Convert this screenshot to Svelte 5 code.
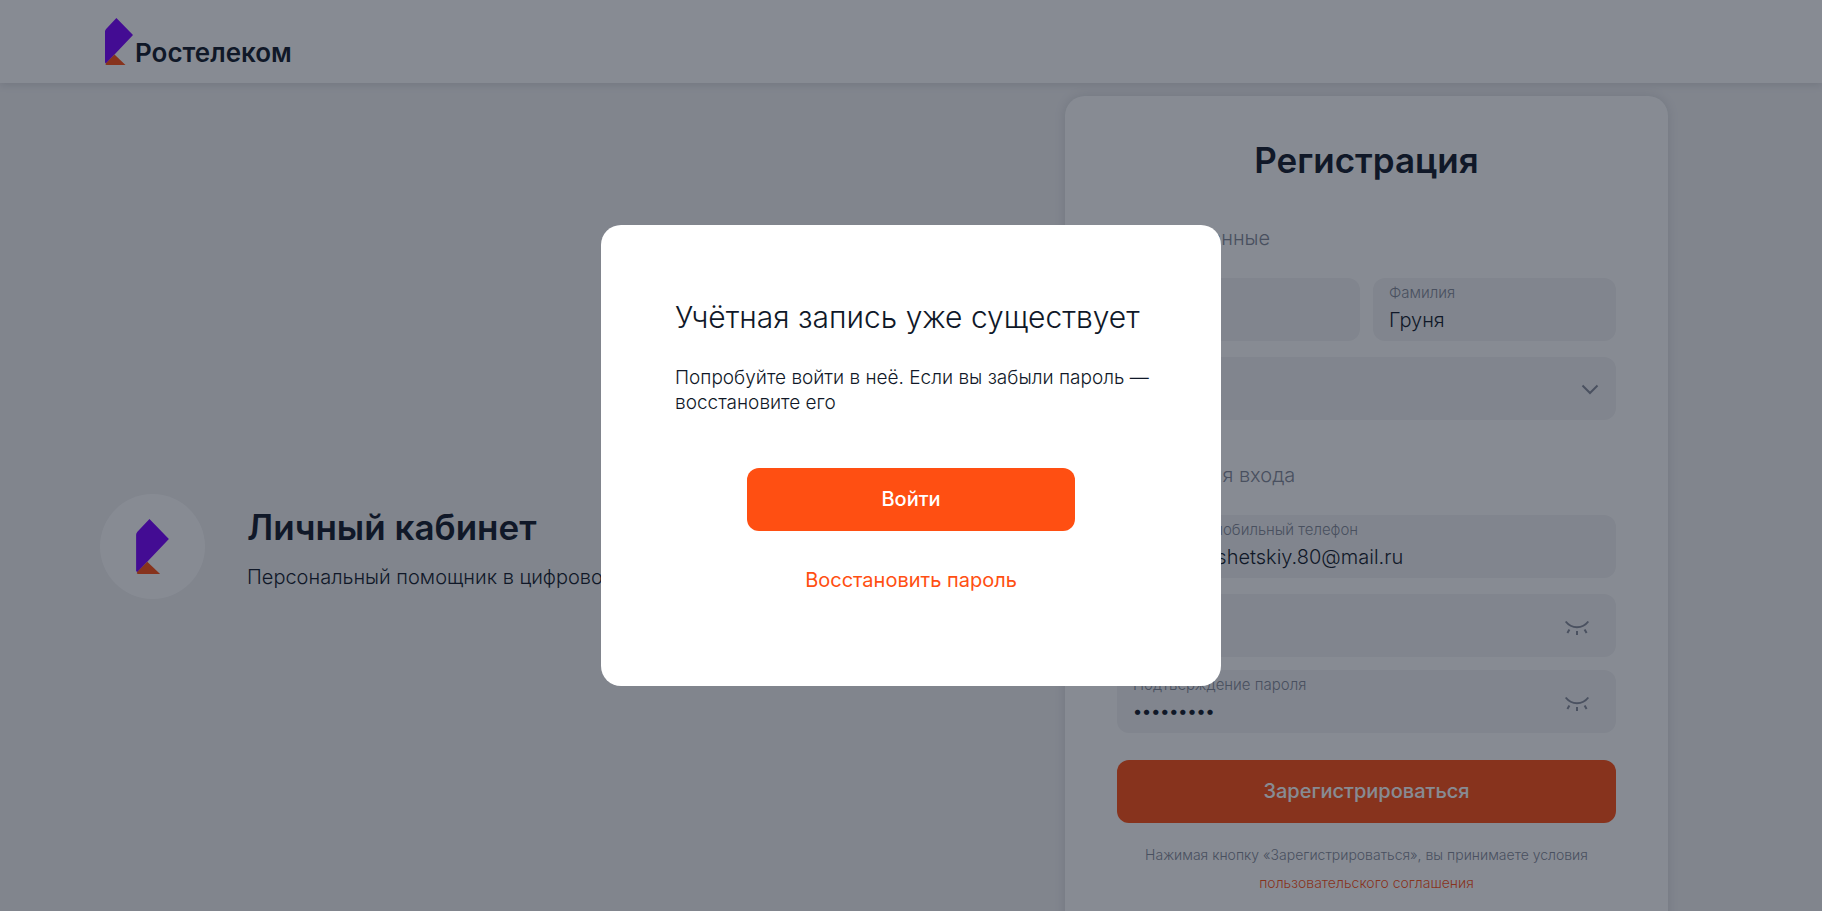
<script>
  let firstName = $state('Сергей');
  let lastName = $state('Груня');
  let region = $state('Москва г');
  let login = $state('dan.gorushetskiy.80@mail.ru');
  let password = $state('password1');
  let confirm = $state('password1');
  let showPassword = $state(false);
  let showConfirm = $state(false);
</script>

{#snippet mark()}
  <svg class="mark" viewBox="0 0 28 47" aria-hidden="true">
    <path fill="#7700ff" d="M0 13.500Q0 12 1.100 10.900L11.400 0 28 17 1 45.500 0 44.500z" />
    <path fill="#ff4f12" d="M9.500 36.500 20.500 47H1.500Q-.2 46.600 1 45.200z" />
  </svg>
{/snippet}

{#snippet closedEye()}
  <svg width="26" height="26" viewBox="0 0 26 26" fill="none" stroke="currentColor" stroke-width="2" aria-hidden="true">
    <path d="M1.700 7.500C7.500 15 18.500 15 24.300 7.500M13 17v4M5.400 15.500l-2 3.500M20.600 15.500l2 3.500" />
  </svg>
{/snippet}

<div class="page">
  <header>
    <a class="logo" href="#home">{@render mark()}<span>Ростелеком</span></a>
  </header>

  <main>
    <section class="intro">
      <div class="badge">{@render mark()}</div>
      <div>
        <h1>Личный кабинет</h1>
        <p>Персональный помощник в цифровом мире Ростелекома</p>
      </div>
    </section>

    <form class="card" onsubmit={(e) => e.preventDefault()}>
      <h1>Регистрация</h1>

      <h2>Личные данные</h2>
      <div class="fields">
        <div class="pair">
          <div class="field">
            <label for="first">Имя</label>
            <input id="first" bind:value={firstName} />
          </div>
          <div class="field">
            <label for="last">Фамилия</label>
            <input id="last" bind:value={lastName} />
          </div>
        </div>
        <div class="field">
          <label for="region">Регион</label>
          <select id="region" bind:value={region}>
            <option>Москва г</option>
          </select>
          <svg class="chevron" width="18" height="12" viewBox="0 0 18 12" fill="none" stroke="currentColor" stroke-width="2" aria-hidden="true">
            <path d="m1.500 1.500 7.500 7.500 7.500-7.500" />
          </svg>
        </div>
      </div>

      <h2>Данные для входа</h2>
      <div class="fields">
        <div class="field">
          <label for="login">E-mail или мобильный телефон</label>
          <input id="login" bind:value={login} />
        </div>
        <div class="passwords">
          <div class="field">
            <label for="password">Пароль</label>
            <input id="password" type={showPassword ? 'text' : 'password'} bind:value={password} />
            <button class="eye" type="button" aria-label="Показать пароль" onclick={() => (showPassword = !showPassword)}>{@render closedEye()}</button>
          </div>
          <div class="field">
            <label for="confirm">Подтверждение пароля</label>
            <input id="confirm" type={showConfirm ? 'text' : 'password'} bind:value={confirm} />
            <button class="eye" type="button" aria-label="Показать пароль" onclick={() => (showConfirm = !showConfirm)}>{@render closedEye()}</button>
          </div>
        </div>
      </div>

      <button class="primary" type="submit">Зарегистрироваться</button>
      <p class="terms">
        Нажимая кнопку «Зарегистрироваться», вы принимаете условия
        <a href="#terms">пользовательского соглашения</a>
      </p>
    </form>
  </main>
</div>

<div class="overlay">
  <div class="modal" role="dialog" aria-modal="true" aria-labelledby="modal-title">
    <h2 id="modal-title">Учётная запись уже существует</h2>
    <p>Попробуйте войти в неё. Если вы забыли пароль — восстановите его</p>
    <button class="primary" type="button">Войти</button>
    <a href="#restore">Восстановить пароль</a>
  </div>
</div>

<style>
  :global(body) {
    margin: 0;
    overflow: hidden;
  }
  .page,
  .overlay {
    font-family: Inter, 'Liberation Sans', sans-serif;
    font-weight: 300;
    font-size: 20px;
    color: #101828;
  }
  .page {
    height: 100vh;
    overflow: hidden;
    background: #f2f2f3;
  }
  h1,
  h2,
  p {
    margin: 0;
  }
  a {
    color: #ff4f12;
    text-decoration: none;
  }
  button,
  input,
  select {
    font: inherit;
    color: inherit;
    border: 0;
    outline: 0;
    padding: 0;
    margin: 0;
    background: none;
  }
  header {
    display: flex;
    padding: 18px 105px;
    background: #fff;
    box-shadow: 0 2px 8px rgba(16, 24, 40, 0.12);
  }
  .mark {
    display: block;
    width: 28px;
    height: 47px;
  }
  .logo {
    display: flex;
    align-items: flex-end;
    gap: 2px;
    color: #101828;
    font-size: 26px;
    font-weight: 600;
    line-height: 24px;
  }
  main {
    display: grid;
    grid-template-columns: 1fr 603px;
    align-items: center;
    padding: 13px 154px 0 100px;
  }
  .intro {
    display: flex;
    align-items: center;
    gap: 42px;
    white-space: nowrap;
  }
  .badge {
    display: grid;
    place-items: center;
    width: 105px;
    height: 105px;
    border-radius: 50%;
    background: #fff;
  }
  .badge .mark {
    width: 33px;
    height: 55px;
  }
  h1 {
    font-size: 35px;
    line-height: 44px;
    font-weight: 600;
  }
  .intro p {
    margin-top: 16px;
    line-height: 24px;
  }
  .card {
    padding: 42px 52px 100px;
    border-radius: 20px;
    background: #fff;
    box-shadow: 0 0 12px rgba(16, 24, 40, 0.12);
  }
  .card h1 {
    text-align: center;
  }
  .card h2 {
    margin: 43px 0 28px;
    font-size: 20px;
    line-height: 24px;
    font-weight: 300;
    color: #838997;
  }
  .card h1 + h2 {
    margin-top: 44px;
  }
  .fields {
    display: grid;
    gap: 16px;
  }
  .pair {
    display: grid;
    grid-template-columns: 1fr 1fr;
    gap: 13px;
  }
  .passwords {
    display: grid;
    gap: 13px;
  }
  .field {
    position: relative;
    box-sizing: border-box;
    height: 63px;
    min-width: 0;
    padding: 6px 16px;
    border-radius: 12px;
    background: #f2f3f4;
  }
  .field label {
    display: block;
    font-size: 15px;
    line-height: 18px;
    color: #838997;
  }
  .field input,
  .field select {
    display: block;
    width: 100%;
    height: 36px;
    appearance: none;
  }
  .field input[type='password'] {
    height: 34px;
    font-size: 17px;
    font-weight: 500;
  }
  .chevron {
    position: absolute;
    top: 27px;
    right: 17px;
    color: #858a99;
  }
  .eye {
    position: absolute;
    top: 20px;
    right: 26px;
    height: 26px;
    color: #858a99;
    cursor: pointer;
  }
  .primary {
    height: 63px;
    padding-bottom: 2px;
    border-radius: 12px;
    background: #ff4f12;
    color: #fff;
    font-weight: 500;
    cursor: pointer;
  }
  .card .primary {
    width: 100%;
    margin-top: 27px;
  }
  .terms {
    margin-top: 18px;
    font-size: 14px;
    line-height: 28px;
    text-align: center;
    color: #838997;
  }
  .terms a {
    display: block;
  }
  .overlay {
    position: fixed;
    inset: 0;
    display: grid;
    place-items: center;
    background: rgba(16, 24, 40, 0.5);
  }
  .modal {
    display: flex;
    flex-direction: column;
    box-sizing: border-box;
    width: 620px;
    padding: 72px 64px 90px 74px;
    border-radius: 20px;
    background: #fff;
  }
  .modal h2 {
    font-size: 30px;
    line-height: 40px;
    font-weight: 300;
  }
  .modal p {
    margin-top: 28px;
    font-size: 19px;
    line-height: 25px;
  }
  .modal .primary,
  .modal a {
    align-self: center;
    margin-right: 10px;
  }
  .modal .primary {
    width: 328px;
    margin-top: 53px;
    margin-bottom: 33px;
  }
  .modal a {
    line-height: 32px;
    font-weight: 400;
  }
</style>
